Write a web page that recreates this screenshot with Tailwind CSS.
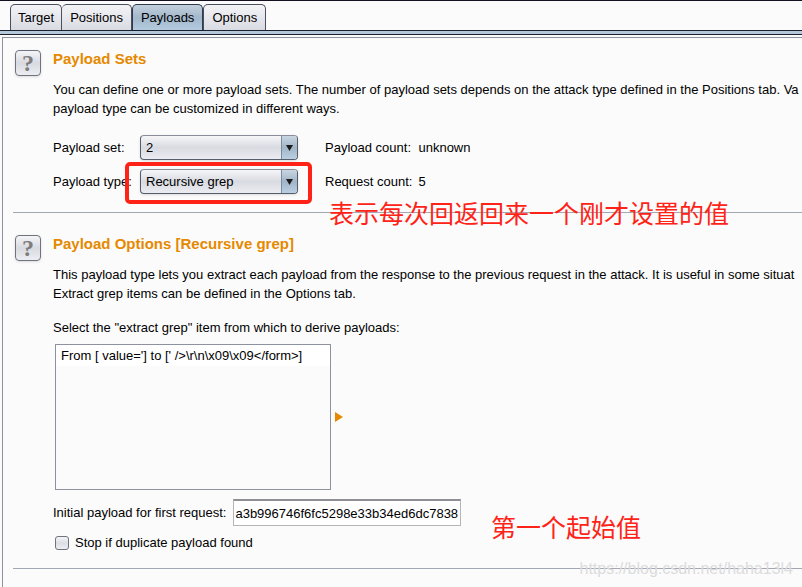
<!DOCTYPE html>
<html lang="en">
<head>
  <meta charset="UTF-8" />
  <meta name="viewport" content="width=device-width, initial-scale=1.0" />
  <title>Payloads</title>
  <script src="https://cdn.jsdelivr.net/npm/@tailwindcss/browser@4"></script>
</head>
<body class="min-h-screen flex flex-col overflow-hidden bg-[#fbfbfb] text-black text-[13px] leading-[19px] font-['Liberation_Sans','Noto_Sans_CJK_SC',sans-serif]">

  <!-- Tabs -->
  <nav class="flex border-t border-[#14101f] pt-[3px] pl-[10px]">
    <button class="h-[26px] px-[7px] rounded-t-[5px] border border-b-0 border-[#4b4f5c] bg-linear-to-b from-[#f4f4f7] to-[#d9dbe2]">Target</button>
    <button class="h-[26px] px-2 rounded-t-[5px] border border-b-0 border-l-0 border-[#4b4f5c] bg-linear-to-b from-[#f4f4f7] to-[#d9dbe2]">Positions</button>
    <button class="h-[26px] px-2 rounded-t-[5px] border border-b-0 border-[#2c3a4c] bg-linear-to-b from-[#c3d0dd] via-[#a3b8cb] to-[#b4cade]">Payloads</button>
    <button class="h-[26px] px-2 rounded-t-[5px] border border-b-0 border-[#4b4f5c] bg-linear-to-b from-[#f4f4f7] to-[#d9dbe2]">Options</button>
  </nav>
  <div class="h-[5px] border-y border-[#1b1f2e] bg-[#b5c8da]"></div>

  <main class="relative flex-1 mt-[2px] ml-[2px] pl-[10px] border-t border-l border-[#8e929f]">

    <!-- Payload Sets -->
    <section class="flex gap-3 pl-[2px] pt-[10px] pb-[18px] border-b border-[#a3a7b3]">
      <button class="shrink-0 mt-[2px] size-[26px] rounded-[4px] border border-[#6f737d] bg-linear-to-b from-[#f5f5f7] via-[#d8dae1] to-[#eceef3] shadow-sm font-['Liberation_Serif',serif] font-bold text-[24px] leading-6 text-[#7d7d7d]">?</button>
      <div class="min-w-0">
        <h2 class="text-[15px] leading-[22px] font-bold text-[#e58900]">Payload Sets</h2>
        <p class="mt-[10px] whitespace-nowrap">You can define one or more payload sets. The number of payload sets depends on the attack type defined in the Positions tab. Va<br />payload type can be customized in different ways.</p>
        <div class="mt-[17px] grid grid-cols-[87px_158px_auto_auto] gap-y-[9px] items-center justify-start">
          <label for="payloadSet">Payload set:</label>
          <div class="relative">
            <select id="payloadSet" class="block appearance-none w-full h-[25px] pl-[5px] rounded-[4px] border border-[#555d6b] border-t-[#8b8e98] bg-linear-to-b from-[#f6f6f8] via-[#d9dbe2] to-[#eaecf1] shadow-sm">
              <option>2</option>
            </select>
            <span class="absolute right-px top-px h-[23px] w-4 rounded-r-[3px] border-l border-[#7b8c9e] bg-linear-to-b from-[#c9d6e2] via-[#a1b5c8] to-[#b9cfe2] flex items-center justify-center pointer-events-none">
              <svg width="7" height="6" viewBox="0 0 7 6"><path d="M0 0H7L3.500 6Z" fill="#1c1c1c" /></svg>
            </span>
          </div>
          <span class="pl-[27px]">Payload count:</span>
          <span class="pl-[6px]">unknown</span>

          <label for="payloadType" class="whitespace-nowrap">Payload type:</label>
          <div class="relative">
            <select id="payloadType" class="block appearance-none w-full h-[25px] pl-[5px] rounded-[4px] border border-[#555d6b] border-t-[#8b8e98] bg-linear-to-b from-[#f6f6f8] via-[#d9dbe2] to-[#eaecf1] shadow-sm">
              <option>Recursive grep</option>
            </select>
            <span class="absolute right-px top-px h-[23px] w-4 rounded-r-[3px] border-l border-[#7b8c9e] bg-linear-to-b from-[#c9d6e2] via-[#a1b5c8] to-[#b9cfe2] flex items-center justify-center pointer-events-none">
              <svg width="7" height="6" viewBox="0 0 7 6"><path d="M0 0H7L3.500 6Z" fill="#1c1c1c" /></svg>
            </span>
            <!-- Red marker round the payload type -->
            <span class="absolute -left-[15px] -right-[14px] -top-[7px] -bottom-[10px] rounded-[5px] border-4 border-[#ff2317] pointer-events-none"></span>
          </div>
          <span class="pl-[27px]">Request count:</span>
          <span class="pl-[6px]">5</span>
        </div>
      </div>
    </section>

    <!-- Payload Options -->
    <section class="flex gap-3 pl-[2px] pt-5 pb-[16px] border-b border-[#a3a7b3]">
      <button class="shrink-0 mt-[2px] size-[26px] rounded-[4px] border border-[#6f737d] bg-linear-to-b from-[#f5f5f7] via-[#d8dae1] to-[#eceef3] shadow-sm font-['Liberation_Serif',serif] font-bold text-[24px] leading-6 text-[#7d7d7d]">?</button>
      <div class="min-w-0">
        <h2 class="text-[15px] leading-[22px] font-bold text-[#e58900]">Payload Options [Recursive grep]</h2>
        <p class="mt-[10px] whitespace-nowrap">This payload type lets you extract each payload from the response to the previous request in the attack. It is useful in some situat<br />Extract grep items can be defined in the Options tab.</p>
        <label for="grepItems" class="block mt-[15px]">Select the "extract grep" item from which to derive payloads:</label>
        <div class="mt-[7px] ml-[2px] flex items-center gap-1">
          <select id="grepItems" size="7" class="appearance-none w-[276px] h-[146px] border border-[#8e929f] overflow-hidden">
            <option class="min-h-[21px] px-[5px] pt-[3px] pb-[3px] bg-white">From [ value='] to [' />\r\n\x09\x09&lt;/form&gt;]</option>
          </select>
          <svg width="8" height="10" viewBox="0 0 8 10"><path d="M0 0L8 5L0 10Z" fill="#e58900" /></svg>
        </div>
        <div class="mt-[9px] flex items-center gap-[7px]">
          <label for="initialPayload">Initial payload for first request:</label>
          <input type="text" id="initialPayload" value="a3b996746f6fc5298e33b34ed6dc7838" class="w-[228px] h-[27px] px-px bg-white border border-[#b5b5b8] border-t-2 border-t-[#8f8f94]" />
        </div>
        <div class="mt-[7px] ml-[2px] flex items-center gap-[6px]">
          <input type="checkbox" id="stopDuplicate" class="appearance-none size-[14px] rounded-[3px] border border-[#6f737d] bg-linear-to-b from-[#f5f5f7] via-[#dcdee5] to-[#eceef3]" />
          <label for="stopDuplicate">Stop if duplicate payload found</label>
        </div>
      </div>
    </section>

    <!-- Notes written over the panel -->
    <p class="absolute left-[326px] top-[158px] text-[25px] leading-9 text-[#ff2317] whitespace-nowrap" lang="zh">表示每次回返回来一个刚才设置的值</p>
    <p class="absolute left-[488px] top-[472px] text-[25px] leading-9 text-[#ff2317] whitespace-nowrap" lang="zh">第一个起始值</p>
    <p class="absolute right-[9px] bottom-[8px] text-[16px] leading-5 text-[#dcdcde]">https://blog.csdn.net/haha13l4</p>
  </main>
</body>
</html>
